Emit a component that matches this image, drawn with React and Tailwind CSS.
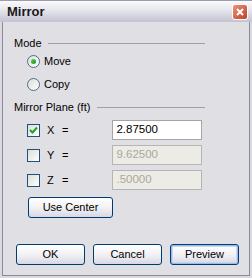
import { useState } from 'react';

function Radio({ checked, label, onClick }) {
    return (
        <div className="flex h-[13px] items-center" onClick={onClick}>
            <div className="relative ml-[24px] h-[13px] w-[13px] rounded-full border border-[#4d6e8f] bg-gradient-to-br from-[#dcdcd7] to-white">
                {checked && (
                    <div className="absolute left-[3px] top-[3px] h-[5px] w-[5px] rounded-full bg-gradient-to-br from-[#55d055] to-[#149414]" />
                )}
            </div>
            <span className="ml-[4px]">{label}</span>
        </div>
    );
}

function Check({ checked }) {
    return (
        <div className="flex h-[13px] w-[13px] items-center justify-center border border-[#1c5180] bg-gradient-to-br from-[#dcdcd7] to-white">
            {checked && (
                <svg width="9" height="9" viewBox="0 0 9 9">
                    <path d="M1 4 L3.5 6.5 L8 1.5" fill="none" stroke="#21a121" strokeWidth="2" />
                </svg>
            )}
        </div>
    );
}

function CoordRow({ axis, value, enabled }) {
    return (
        <div className="flex h-[20px] items-center">
            <div className="ml-[24px]">
                <Check checked={enabled} />
            </div>
            <span className="ml-[7px] w-[15px]">{axis}</span>
            <span>=</span>
            <div
                className={
                    enabled
                        ? 'ml-[44px] flex h-[20px] w-[90px] items-center border border-[#a5a5a5] bg-white pl-[3px] text-[11.5px] text-black'
                        : 'ml-[44px] flex h-[20px] w-[90px] items-center border border-[#b5b5b5] bg-[#ecebe6] pl-[3px] text-[11.5px] text-[#aca899]'
                }
            >
                {value}
            </div>
        </div>
    );
}

function XpButton({ children, className = '', focused }) {
    return (
        <button
            className={
                'flex h-[21px] items-center justify-center rounded-[3px] border border-[#003c74] bg-gradient-to-b from-white via-[#f2f2f5] to-[#d8d8e4] text-[11px] text-black ' +
                (focused ? 'shadow-[inset_0_0_0_1px_#9ebbe8,inset_0_0_0_2px_#c4d6f2] ' : '') +
                className
            }
        >
            {children}
        </button>
    );
}

export default function App() {
    const [mode, setMode] = useState('move');

    return (
        <div
            className="flex h-[278px] w-[252px] flex-col bg-[#d9d9e2] text-[11px] text-black"
            style={{ fontFamily: '"Liberation Sans", Arial, sans-serif' }}
        >
            <div className="flex h-[22px] items-center border-t border-[#9c9cae] bg-gradient-to-b from-[#fbfbfd] via-[#e2e2ea] to-[#c2c2d1] pl-[7px] pr-[4px]">
                <span className="flex-1 text-[13px] font-bold text-[#1a1a1a]">Mirror</span>
                <div className="flex h-[16px] w-[16px] items-center justify-center rounded-[3px] border border-white bg-gradient-to-br from-[#e9937a] to-[#c03c23]">
                    <svg width="8" height="8" viewBox="0 0 8 8">
                        <path d="M1 1 L7 7 M7 1 L1 7" stroke="white" strokeWidth="2" />
                    </svg>
                </div>
            </div>

            <div className="mx-[2px] mb-[2px] flex flex-1 flex-col border border-t-0 border-[#8a8a9a] bg-[#e0dfe3]">
                <div className="mt-[14px] flex h-[14px] items-center pl-[11px]">
                    <span>Mode</span>
                    <div className="ml-[6px] w-[157px] border-t border-[#a0a0a8]" />
                </div>
                <div className="mt-[5px]">
                    <Radio checked={mode === 'move'} label="Move" onClick={() => setMode('move')} />
                </div>
                <div className="mt-[10px]">
                    <Radio checked={mode === 'copy'} label="Copy" onClick={() => setMode('copy')} />
                </div>

                <div className="mt-[9px] flex h-[14px] items-center pl-[11px]">
                    <span>Mirror Plane (ft)</span>
                    <div className="ml-[7px] mr-[44px] flex-1 border-t border-[#a0a0a8]" />
                </div>

                <div className="mt-[6px] flex flex-col gap-[5px]">
                    <CoordRow axis="X" value="2.87500" enabled />
                    <CoordRow axis="Y" value="9.62500" />
                    <CoordRow axis="Z" value=".50000" />
                </div>

                <div className="mt-[7px] pl-[25px]">
                    <XpButton className="w-[85px]">Use Center</XpButton>
                </div>

                <div className="mt-[26px] flex gap-[8px] pl-[13px]">
                    <XpButton className="w-[69px]">OK</XpButton>
                    <XpButton className="w-[69px]">Cancel</XpButton>
                    <XpButton className="w-[69px]" focused>Preview</XpButton>
                </div>
            </div>
        </div>
    );
}
